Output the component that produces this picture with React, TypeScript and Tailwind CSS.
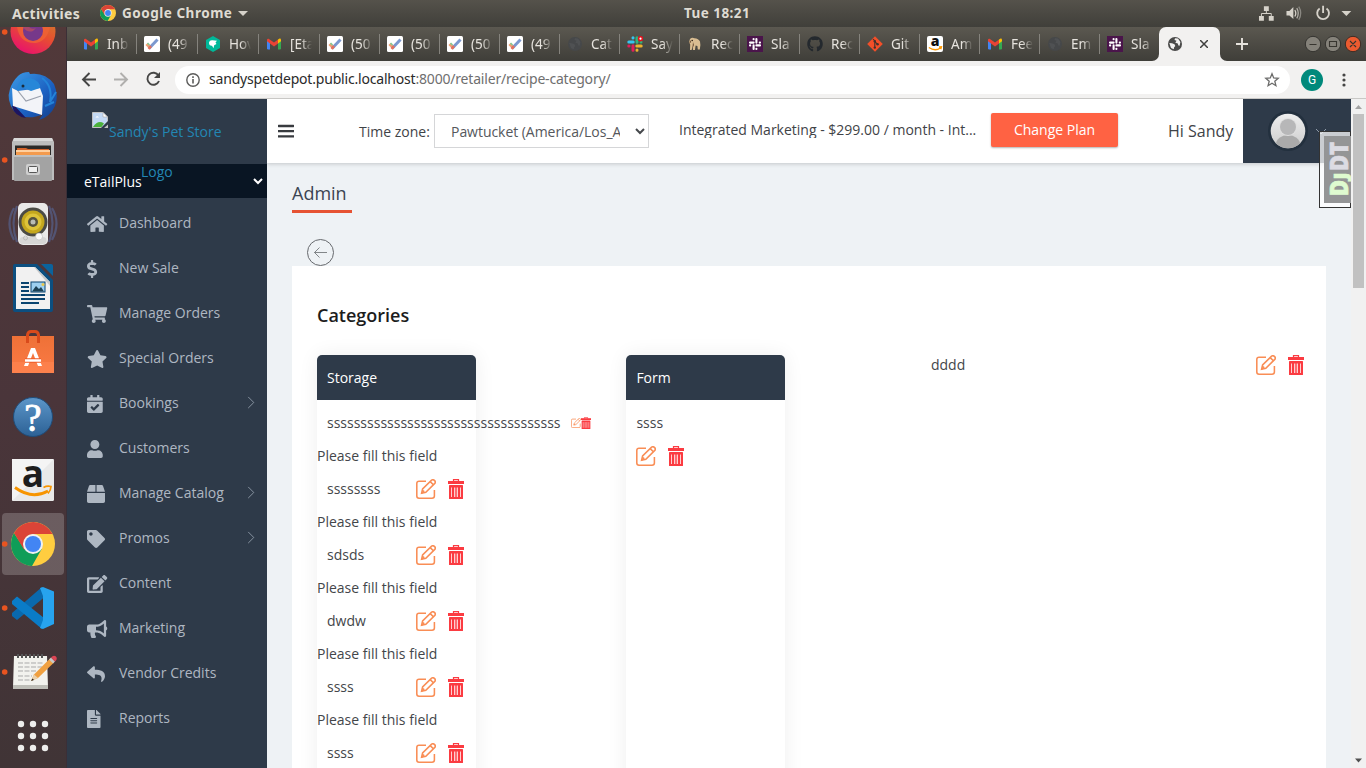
import React from "react";
import {
  FaHome, FaDollarSign, FaShoppingCart, FaStar, FaCalendarCheck, FaUser, FaBox, FaTag,
  FaEdit, FaBullhorn, FaReply, FaFileAlt, FaGithub,
} from "react-icons/fa";

/* ---------- shared drawings ---------- */

function ChromeLogo({ className }: { className: string }) {
  return (
    <svg viewBox="0 0 44 44" className={className}>
      <circle cx="22" cy="22" r="22" fill="#ffcd40" />
      <path d="M3 11 A22 22 0 0 0 21 44 L30.7 27 L22 22 L13.3 27 Z" fill="#0f9d58" />
      <path d="M3 11 L13.3 28 L16 14 L22 12 L41.600 12 A22 22 0 0 0 3 11Z" fill="#db4437" />
      <circle cx="22" cy="22" r="10" fill="#f1f1f1" />
      <circle cx="22" cy="22" r="8" fill="#4285f4" />
    </svg>
  );
}

function Gmail() {
  return (
    <svg viewBox="0 0 16 16" className="size-4">
      <path d="M1 13V4.5L4 6.8V13.5H2Z" fill="#4285f4" />
      <path d="M15 13V4.5L12 6.8V13.5H14Z" fill="#34a853" />
      <path d="M12 3.6 13.6 2.6Q15 2.4 15 4V5.2L12 7.4Z" fill="#fbbc04" />
      <path d="M1 5.2V4Q1 2.4 2.6 2.7L8 6.6 12 3.6V7.4L8 10.4 4 7.4Z" fill="#ea4335" />
    </svg>
  );
}

function Check() {
  return (
    <svg viewBox="0 0 16 16" className="size-4">
      <rect width="16" height="16" rx="1.5" fill="#fff" />
      <path d="M2.5 8 6 11.5" stroke="#f2a071" strokeWidth="3" />
      <path d="M5 12.5 13.5 3.5" stroke="#7b98cf" strokeWidth="3" />
      <path d="M4.5 12.8 7 10.2" stroke="#e8705a" strokeWidth="2.6" />
      <path d="M3.5 7 5.5 9" stroke="#82c894" strokeWidth="1.6" />
    </svg>
  );
}

function Hex() {
  return (
    <svg viewBox="0 0 16 16" className="size-4">
      <path d="M8 0 15 4V12L8 16 1 12V4Z" fill="#00b899" />
      <path d="M4 6.500Q4.500 4 7.500 4.300L12 4.700 10.500 6.500 11.500 8 9.200 9.200 8.500 12.200 7 9.800Q4 10 4 6.500Z" fill="#fff" />
    </svg>
  );
}

function GlobeIcon({ color }: { color: string }) {
  const opacity = color === "#4a4a49" ? 1 : 0.06;
  return (
    <svg viewBox="0 0 16 16" className="size-4 shrink-0">
      <circle cx="8" cy="8" r="7" fill={color} />
      <path d="M2.300 7 5 7.300 7.500 8.200 8.300 10 7 11.500 6.800 13.300 4 12Z" fill="#f2f1f0" fillOpacity={opacity} />
      <path d="M8 2.200 11 2.500 13.400 6 12.600 9.800 11.400 9.400 10.800 7.500 8.300 6.800 9.500 4.800 7.500 4Z" fill="#f2f1f0" fillOpacity={opacity} />
    </svg>
  );
}

function SlackColor() {
  return (
    <svg viewBox="0 0 16 16" className="size-4">
      <g strokeWidth="3" strokeLinecap="round">
        <path d="M1.8 6H6.2M6 1.8V2" stroke="#36c5f0" />
        <path d="M10 1.8V6.2M14 6V6" stroke="#2eb67d" />
        <path d="M9.8 10H14.2M10 14V14.2" stroke="#ecb22e" />
        <path d="M6 9.8V14.2M1.8 10H2" stroke="#e01e5a" />
      </g>
      <circle cx="13.5" cy="2.7" r="2.7" fill="#e8101c" />
      <circle cx="13.5" cy="2.7" r="1.1" fill="#fff" />
    </svg>
  );
}

function SlackPurple() {
  return (
    <svg viewBox="0 0 16 16" className="size-4">
      <rect width="16" height="16" fill="#4a154b" />
      <g stroke="#fff" strokeWidth="2.100" strokeLinecap="round">
        <path d="M3 6.600H6.600M6.600 3V3.200M9.400 3V6.600M12.800 6.600H13M9.400 9.400H13M9.400 12.800V13M6.600 9.400V13M3 9.400H3.200" />
      </g>
    </svg>
  );
}

function Dog() {
  return (
    <svg viewBox="0 0 16 16" className="size-4">
      <path d="M3 3Q5 .8 7.500 2.200 11.500 2.600 13 5.500L13.400 9 12.800 13.500H10.800L10.400 10 8.600 9.600 8 14H6L5.600 10 4.600 14H3L3.200 8.500 2 6Z" fill="#d9bd92" />
      <path d="M3 4 2.400 7.500 4.300 6ZM6 6 5.400 12.500 7 9Z" fill="#6d5138" />
      <circle cx="5.200" cy="4.500" r=".8" fill="#2f241a" />
    </svg>
  );
}

function GitIcon() {
  return (
    <svg viewBox="0 0 16 16" className="size-4">
      <path d="M8 .2 15.800 8 8 15.800.2 8Z" fill="#f34f29" />
      <path d="M6 3 7.800 5V12M7.800 5.500 10.500 8.300" stroke="#44312c" strokeWidth="1.100" fill="none" />
      <circle cx="7.800" cy="5.200" r="1.200" fill="#44312c" />
      <circle cx="10.600" cy="8.200" r="1.200" fill="#44312c" />
      <circle cx="7.800" cy="11.600" r="1.200" fill="#44312c" />
    </svg>
  );
}

function AmazonTab() {
  return (
    <svg viewBox="0 0 16 16" className="size-4">
      <rect width="16" height="16" rx="2" fill="#fff" />
      <text x="8" y="10" textAnchor="middle" fontSize="14" fontWeight="800" fontFamily="Open Sans, sans-serif" fill="#111">a</text>
      <path d="M1.800 11.500Q8 15.800 13.500 12M12 11 14.500 10.800 13.800 13.200" stroke="#f90" strokeWidth="1.300" fill="none" />
    </svg>
  );
}

function EditIcon({ className }: { className: string }) {
  return (
    <svg viewBox="0 0 20 20" className={className} fill="none" stroke="#f98d55" strokeWidth="1.550">
      <path d="M10 2.200H3Q.8 2.200.8 4.400V17Q.8 19.200 3 19.200H16Q18.400 19.200 18.400 17V11" />
      <path d="M5.600 14.200 6.600 10 15.600 1.200Q17 .1 18.600 1.600 20 3 18.800 4.400L9.800 13.200Z" />
      <path d="M14.200 2.600 17.400 5.800M5.600 14.200 8.200 11.600" />
    </svg>
  );
}

function TrashIcon({ className }: { className: string }) {
  return (
    <svg viewBox="0 0 16 20" className={className} preserveAspectRatio="none">
      <path d="M5.500 2.600V.6H10.500V2.600" stroke="#fb3b41" strokeWidth="1.200" fill="none" />
      <rect x="0" y="2" width="16" height="3" fill="#fb3b41" />
      <rect x="1" y="6" width="14" height="14" rx=".6" fill="#fb3b41" />
      <path d="M3.500 8.500V18M6.500 8.500V18M9.500 8.500V18M12.500 8.500V18" stroke="#ffcfd0" strokeWidth="1" />
      <path d="M7.500 8.500V18M8.500 8.500V18" stroke="#fd8f92" strokeWidth=".6" />
    </svg>
  );
}

/* ---------- dock ---------- */

const dockIcons: { name: string; running?: boolean; active?: boolean; art: React.ReactNode }[] = [
  {
    name: "firefox", running: true, art: (
      <>
        <defs>
          <linearGradient id="ff" x1=".8" y1="0" x2=".3" y2="1">
            <stop offset="0" stopColor="#c98a2c" /><stop offset=".5" stopColor="#e8502f" /><stop offset="1" stopColor="#e8106e" />
          </linearGradient>
        </defs>
        <circle cx="33" cy="31.500" r="22.500" fill="url(#ff)" />
        <path d="M17 27Q20 44 36 43 47 41 50 27Z" fill="#ef6335" opacity=".8" />
        <circle cx="33" cy="31" r="10" fill="#76388a" />
        <path d="M23 27H29Q32 30 36 28L33 31Q27 33 23 27Z" fill="#a8486a" />
      </>
    ),
  },
  {
    name: "thunderbird", art: (
      <>
        <defs>
          <linearGradient id="tb" x1="0" y1="0" x2="1" y2="1">
            <stop offset="0" stopColor="#3d9de8" /><stop offset=".6" stopColor="#1b5fc0" /><stop offset="1" stopColor="#123c86" />
          </linearGradient>
        </defs>
        <path d="M18 12Q22 8 29 8L30 10Q45 8 54 20 59 32 55 42 50 53 39 56L43 50Q26 58 14 47 6 36 10 25 12 18 18 12Z" fill="url(#tb)" />
        <path d="M12 42Q14 52 26 54L14 41Z" fill="#1d1560" />
        <path d="M12 24 18 27 40 24 43 32 42 51 13 42Z" fill="#f3f4f8" />
        <path d="M18 27 26 37 41 32" stroke="#9aa0ad" strokeWidth="1.200" fill="none" />
        <path d="M17 26Q18 14 30 14 41 17 40 24L31 27 21 23 18 27Z" fill="#2787d8" />
        <path d="M42 14Q53 22 50 38L56 28M45 42 54 38" stroke="#2383d8" strokeWidth="2" fill="none" />
        <circle cx="23" cy="22" r="1.500" fill="#1b2c3c" />
      </>
    ),
  },
  {
    name: "files", running: true, art: (
      <>
        <path d="M14 10H52L54 14V52H12V14Z" fill="#bdbdbd" />
        <path d="M14 10H52L53 13H13Z" fill="#d9d9d9" />
        <rect x="15" y="17.500" width="36" height="10" fill="#2c2a28" />
        <path d="M17 20H26L28 21H49V28H17Z" fill="#d3642c" />
        <rect x="16" y="22" width="34" height="2" fill="#ffcf9e" />
        <rect x="16" y="24" width="34" height="3.500" fill="#f39a4d" />
        <rect x="14" y="27" width="38" height="26" rx="1" fill="#a3a3a3" />
        <path d="M14 28H52" stroke="#dadada" strokeWidth="1" />
        <rect x="26" y="36" width="14" height="11" rx="2" fill="#cfcfcf" />
        <rect x="28.500" y="38.500" width="9" height="6" rx="1" fill="#efefef" stroke="#565656" strokeWidth="1" />
      </>
    ),
  },
  {
    name: "rhythmbox", art: (
      <>
        <path d="M14 16Q5 31 14 48M52 16Q61 31 52 48M17 14Q10 31 17 50M49 14Q56 31 49 50" stroke="#535473" strokeWidth="2.200" fill="none" />
        <rect x="18" y="11" width="30" height="42" rx="5" fill="#e9e9e8" />
        <rect x="19.500" y="45" width="27" height="7" rx="3.500" fill="#d6d6d5" />
        <circle cx="33" cy="30" r="14.500" fill="#4b4b45" />
        <circle cx="33" cy="30" r="11.500" fill="#c4a71e" />
        <circle cx="33" cy="30" r="8.500" fill="#ddc33a" />
        <circle cx="33" cy="30" r="5" fill="#55523f" />
        <circle cx="33" cy="30" r="2.500" fill="#b9bcb5" />
        <circle cx="39" cy="44.500" r="3.500" fill="#fafafa" stroke="#bbb" strokeWidth=".6" />
        <circle cx="25.500" cy="46" r="2" fill="none" stroke="#aaa" strokeWidth=".6" />
      </>
    ),
  },
  {
    name: "writer", art: (
      <>
        <path d="M15 8H37L53 24V54Q53 56 51 56H15Q13 56 13 54V10Q13 8 15 8Z" fill="#0c4f80" />
        <path d="M41 8H51Q53 8 53 10V20Z" fill="#0b639c" />
        <path d="M16 11H35L50 26V53H16Z" fill="#f1f1f1" />
        <path d="M35 11 50 26V30L34 11Z" fill="#c9c9c9" />
        <path d="M21 27H29M21 31H29M21 35H29M21 39H45M21 43H45M21 47H39" stroke="#0b4570" strokeWidth="2" />
        <rect x="31" y="26" width="14" height="10" fill="#9dd0f0" stroke="#0b4570" strokeWidth="1" />
        <path d="M32 35.500 36 30 39 33 41 31 44 35.500Z" fill="#1c4154" />
        <circle cx="43" cy="28.500" r="1.500" fill="#eac84a" />
      </>
    ),
  },
  {
    name: "software", art: (
      <>
        <defs>
          <linearGradient id="sw" x1="0" y1="0" x2="0" y2="1">
            <stop offset="0" stopColor="#ee7137" /><stop offset="1" stopColor="#fb7a45" />
          </linearGradient>
        </defs>
        <path d="M12 16H54V53H12Z" fill="url(#sw)" />
        <path d="M12 42H54V53H12Z" fill="#ff8652" opacity=".6" />
        <path d="M27.500 23V15Q28 11.500 31 11.500H35Q38 11.500 38.500 15V23" stroke="#d94a1b" strokeWidth="3" fill="none" />
        <path d="M31 28H35L42 46H38L33 33 28 46H24Z" fill="#fff" />
        <path d="M25 40.500H41" stroke="#ee5a24" strokeWidth="4.500" />
        <path d="M25 40.500H41" stroke="#fff" strokeWidth="2.500" />
      </>
    ),
  },
  {
    name: "help", art: (
      <>
        <defs>
          <linearGradient id="hp" x1="0" y1="0" x2="0" y2="1">
            <stop offset="0" stopColor="#5c96c9" /><stop offset="1" stopColor="#2c6195" />
          </linearGradient>
        </defs>
        <circle cx="33" cy="33" r="19.500" fill="url(#hp)" stroke="#1f4c79" strokeWidth="1" />
        <text x="33" y="46.500" textAnchor="middle" fontSize="39" fontWeight="400" fontFamily="Liberation Serif, serif" fill="#fff" stroke="#fff" strokeWidth=".8">?</text>
      </>
    ),
  },
  {
    name: "amazon", art: (
      <>
        <rect x="12" y="11" width="42" height="42" rx="1.500" fill="#e9e9e9" />
        <path d="M12 11H54L12 53Z" fill="#f4f4f4" />
        <text x="33" y="38.500" textAnchor="middle" fontSize="37" fontWeight="700" fontFamily="Open Sans, sans-serif" fill="#1d1d1d">a</text>
        <path d="M15 39.500Q32 52 48 43" stroke="#f79400" strokeWidth="2.800" fill="none" />
        <path d="M43.500 39.500Q47 37.500 51 38.500 51 42 48 45.500" stroke="#f79400" strokeWidth="1.700" fill="none" />
      </>
    ),
  },
  { name: "chrome", running: true, active: true, art: null },
  {
    name: "vscode", running: true, art: (
      <>
        <path d="M42 11 44 21.500 17 44 12 40V37Z" fill="#0a69ad" />
        <path d="M12 25 17 20.500 44 42 42 53 12 28Z" fill="#0a7cc7" />
        <path d="M40 52 43 44V20L40 12 43 11 54 15.500V48L43 53Z" fill="#27a3ee" />
      </>
    ),
  },
  {
    name: "gedit", running: true, art: (
      <>
        <path d="M14 16H47L48 47H13Z" fill="#f2f2ee" />
        <path d="M13 45H48V49H13Z" fill="#bebeb8" />
        <path d="M18 14V18M22 14V18M26 14V18M30 14V18M34 14V18M38 14V18M42 14V18" stroke="#555" strokeWidth="2" />
        <path d="M18 23H44M18 27H42M18 31H36M18 36H32M18 40H30" stroke="#a9a9a9" strokeWidth="1" strokeDasharray="5 1.500" />
        <path d="M31 41 34 34.500 50 18.500 54 22.500 38 38Z" fill="#f0a040" />
        <path d="M31 41 34 34.500 38 38Z" fill="#ead2ae" />
        <path d="M31 41 32.500 38.500 34 40Z" fill="#222" />
        <path d="M49 19.500 53 23.500 55 21.500 51 17.500Z" fill="#c8c8c8" />
        <path d="M51 17.500 55 21.500Q58 19 56 16.500 53.500 14.500 51 17.500Z" fill="#dc4554" />
      </>
    ),
  },
  {
    name: "apps", art: (
      <g fill="#ededec">
        {[20, 32, 44].map((y) => [21, 33, 45].map((x) => <circle key={x + "-" + y} cx={x} cy={y} r="3.200" />))}
      </g>
    ),
  },
];

function Dock() {
  return (
    <nav className="w-[67px] shrink-0 overflow-hidden border-r border-[#3b2f37] bg-gradient-to-b from-[#51393a] via-[#4a353a] to-[#403436]">
      <div className="-mt-[27px] flex flex-col">
        {dockIcons.map((d) => (
          <div key={d.name} className="relative h-16 w-[67px] shrink-0">
            {d.active && <div className="absolute top-px left-[2px] h-[62px] w-[62px] rounded bg-white/20" />}
            <svg viewBox="0 0 67 64" className="relative block h-16 w-[67px]">
              {d.running && <circle cx="4.700" cy="32" r="2.800" fill="#e95420" />}
              {d.art}
            </svg>
            {d.active && <ChromeLogo className="absolute top-[10px] left-[11px] size-[44px]" />}
          </div>
        ))}
      </div>
    </nav>
  );
}

/* ---------- desktop bar ---------- */

function TopBar() {
  return (
    <div className="flex h-[27px] shrink-0 items-center bg-gradient-to-b from-[#55524b] to-[#403f3a] font-['Noto_Sans',sans-serif] text-[14px] font-bold text-[#dfdbd2]">
      <span className="ml-3 w-[88px] tracking-[0.3px] whitespace-nowrap">Activities</span>
      <ChromeLogo className="mt-[-1px] size-4" />
      <span className="ml-[6px] w-[112px] text-[13.500px] tracking-[0.520px] whitespace-nowrap">Google Chrome</span>
      <svg viewBox="0 0 10 5" className="ml-[4px] h-[5px] w-[10px]"><path d="M0 0H10L5 5Z" fill="#d6d2ca" /></svg>
      <span className="ml-[436px] w-[80px] text-[13.500px] tracking-[0.450px] whitespace-nowrap">Tue 18:21</span>
      <svg viewBox="0 0 110 27" className="ml-[494px] h-[27px] w-[108px]" preserveAspectRatio="xMinYMid">
        <g transform="translate(1 0)" fill="#d6d2ca">
          <path d="M5 6H10V11H5ZM0 16H5V21H0ZM10 16H15V21H10Z" />
          <path d="M7.500 11V13.500M2.500 16V13.500H12.500V16" stroke="#d6d2ca" strokeWidth="1" fill="none" />
          <path d="M28 11H31L35 7V19L31 15.500H28Z" />
          <path d="M36.500 10Q38.500 13 36.500 16.500" stroke="#d6d2ca" strokeWidth="1.300" fill="none" />
          <path d="M38.500 8Q41.500 13 38.500 18.500" stroke="#b5b2ab" strokeWidth="1.300" fill="none" />
          <path d="M40.500 6.500Q44.500 13 40.500 20" stroke="#8a8882" strokeWidth="1.300" fill="none" />
          <path d="M61.800 8.300A6 6 0 1 0 68.800 8.300M65.300 5.500V13" stroke="#d6d2ca" strokeWidth="1.900" fill="none" />
          <path d="M84 11H94L89 16Z" />
        </g>
      </svg>
    </div>
  );
}

/* ---------- browser ---------- */

const tabs: { label: string; icon: React.ReactNode; wide?: boolean }[] = [
  { label: "Inb", icon: <Gmail />, wide: true },
  { label: "(49", icon: <Check />, wide: true },
  { label: "Hov", icon: <Hex />, wide: true },
  { label: "[Eta", icon: <Gmail />, wide: true },
  { label: "(50", icon: <Check /> },
  { label: "(50", icon: <Check /> },
  { label: "(50", icon: <Check /> },
  { label: "(49", icon: <Check /> },
  { label: "Cat", icon: <GlobeIcon color="#46484a" /> },
  { label: "Say", icon: <SlackColor /> },
  { label: "Rec", icon: <Dog /> },
  { label: "Sla", icon: <SlackPurple /> },
  { label: "Rec", icon: <FaGithub className="size-4 text-[#24292e]" /> },
  { label: "Git", icon: <GitIcon /> },
  { label: "Am", icon: <AmazonTab /> },
  { label: "Fee", icon: <Gmail /> },
  { label: "Em", icon: <GlobeIcon color="#46484a" /> },
  { label: "Sla", icon: <SlackPurple /> },
];

function TabStrip() {
  return (
    <div className="flex h-[34px] shrink-0 bg-gradient-to-b from-[#5b5850] to-[#3f3e39] pl-[9px]">
      {tabs.map((t, i) => (
        <div key={i} className={`flex shrink-0 items-center pl-[7px] ${t.wide ? "w-[61px]" : "w-[60px]"}`}>
          <span className="size-4 shrink-0">{t.icon}</span>
          <span className="ml-2 w-[22px] shrink-0 overflow-hidden [mask-image:linear-gradient(to_right,black_50%,transparent)] font-['Noto_Sans',sans-serif] text-[13.500px] whitespace-nowrap text-[#e6e3dd]">
            {t.label}
          </span>
          {i < tabs.length - 1 && <span className="ml-auto h-5 w-px bg-[#85837d]" />}
        </div>
      ))}
      <div className="-ml-2 flex h-[34px] w-[76px] shrink-0">
        <div className="w-[7px] bg-[#f2f1f0]"><div className="h-full rounded-br-[7px] bg-gradient-to-b from-[#5b5850] to-[#3f3e39]" /></div>
        <div className="flex w-[61px] items-center rounded-t-[7px] bg-[#f2f1f0] pl-[8px]">
          <GlobeIcon color="#4a4a49" />
          <svg viewBox="0 0 8 8" className="ml-[17px] size-2"><path d="M0 0 8 8M8 0 0 8" stroke="#3f3f3e" strokeWidth="1.500" /></svg>
        </div>
        <div className="w-[8px] bg-[#f2f1f0]"><div className="h-full rounded-bl-[7px] bg-gradient-to-b from-[#5b5850] to-[#3f3e39]" /></div>
      </div>
      <div className="flex flex-1 items-center pl-[8px]">
        <svg viewBox="0 0 12 12" className="size-3"><path d="M6 0V12M0 6H12" stroke="#e6e3dd" strokeWidth="1.900" /></svg>
        <svg viewBox="0 0 58 18" className="mr-[4px] ml-auto h-[18px] w-[58px]">
          <circle cx="9" cy="9" r="7.700" fill="#85827a" stroke="#34332f" />
          <circle cx="29" cy="9" r="7.700" fill="#85827a" stroke="#34332f" />
          <circle cx="49" cy="9" r="7.700" fill="#ec5b30" stroke="#3a2c26" />
          <path d="M5.500 9.500H12.500M25.500 6.500H32.500V11.500H25.500ZM46 6 52 12M52 6 46 12" stroke="#37352f" strokeWidth="1.100" fill="none" />
        </svg>
      </div>
    </div>
  );
}

function Toolbar() {
  return (
    <div className="flex h-[38px] shrink-0 items-center border-b border-[#c9c8c6] bg-[#f2f1f0]">
      <svg viewBox="0 0 108 38" className="h-[38px] w-[108px] shrink-0" fill="none">
        <path d="M29 18.500H16M22.500 12 16 18.500 22.500 25" stroke="#464645" strokeWidth="1.900" />
        <path d="M47 18.500H60M53.500 12 60 18.500 53.500 25" stroke="#b0afad" strokeWidth="1.900" />
        <path d="M91.500 14.500A6 6 0 1 0 92 20" stroke="#464645" strokeWidth="1.900" />
        <path d="M93 11V17H87Z" fill="#464645" />
      </svg>
      <div className="flex h-7 w-[1115px] items-center rounded-full bg-white pl-[11px]">
        <svg viewBox="0 0 14 14" className="size-[14px]"><circle cx="7" cy="7" r="6.200" fill="none" stroke="#5c5c5b" strokeWidth="1.400" /><path d="M7 6V10.500M7 3.300V4.900" stroke="#5c5c5b" strokeWidth="1.600" /></svg>
        <span className="-mt-[2px] ml-[9px] font-['Noto_Sans',sans-serif] text-[14px] tracking-[-0.190px] whitespace-nowrap text-[#2a2a2a]">
          sandyspetdepot.public.localhost<span className="text-[#6f6f6f]">:8000/retailer/recipe-category/</span>
        </span>
        <svg viewBox="0 0 16 16" className="mr-[10px] ml-auto size-4"><path d="M8 1.800 9.700 6 14.200 6.300 10.800 9.200 11.900 13.700 8 11.300 4.100 13.700 5.200 9.200 1.800 6.300 6.300 6Z" fill="none" stroke="#6b6b6a" strokeWidth="1.300" /></svg>
      </div>
      <div className="ml-[11px] flex size-[22px] items-center justify-center rounded-full bg-[#00897b] font-['Roboto',sans-serif] text-[12px] text-white">G</div>
      <svg viewBox="0 0 4 14" className="ml-[19px] h-[14px] w-1 fill-[#464645]"><circle cx="2" cy="2" r="1.600" /><circle cx="2" cy="7" r="1.600" /><circle cx="2" cy="12" r="1.600" /></svg>
    </div>
  );
}

/* ---------- page ---------- */

const menu = [
  { label: "Dashboard", Icon: FaHome },
  { label: "New Sale", Icon: FaDollarSign },
  { label: "Manage Orders", Icon: FaShoppingCart },
  { label: "Special Orders", Icon: FaStar },
  { label: "Bookings", Icon: FaCalendarCheck, sub: true },
  { label: "Customers", Icon: FaUser },
  { label: "Manage Catalog", Icon: FaBox, sub: true },
  { label: "Promos", Icon: FaTag, sub: true },
  { label: "Content", Icon: FaEdit },
  { label: "Marketing", Icon: FaBullhorn },
  { label: "Vendor Credits", Icon: FaReply },
  { label: "Reports", Icon: FaFileAlt },
];

function Sidebar() {
  return (
    <aside className="flex w-[200px] shrink-0 flex-col bg-[#2e3a49] text-sm">
      <div className="relative flex h-[65px] shrink-0 items-start pt-[13px] pl-[25px] text-[#2387b4]">
        <svg viewBox="0 0 16 16" className="size-4 shrink-0">
          <path d="M.5.500H11L15.500 5V10L10 15.500H.500Z" fill="#c3d9f5" stroke="#c2c2c2" />
          <path d="M11 .5V5H15.500Z" fill="#fff" stroke="#aaa" strokeWidth=".6" />
          <path d="M3.500 5.500Q5 3 7 5.500Z" fill="#fff" />
          <path d="M1 15Q6 7.500 12 11.500L9.500 15Z" fill="#4bb13b" />
          <path d="M9 16 16 9V11L11 16Z" fill="#2e3a49" />
          <path d="M12 16 16 12.500V16Z" fill="#c2c2c2" />
        </svg>
        <span className="ml-[1px] leading-[40px] whitespace-nowrap">Sandy's Pet Store</span>
        <span className="absolute top-[53px] left-[74px] z-10 leading-[40px]">Logo</span>
      </div>
      <div className="flex h-[34px] shrink-0 items-center bg-[#091523] pr-[4px] pl-[17px] text-white">
        <span className="mt-[2px]">eTailPlus</span>
        <svg viewBox="0 0 10 7" className="ml-auto h-[7px] w-[10px]"><path d="M1 1 5 5 9 1" stroke="#fff" strokeWidth="2" fill="none" /></svg>
      </div>
      <ul className="mt-[2px]">
        {menu.map(({ label, Icon, sub }) => (
          <li key={label} className="flex h-[45px] shrink-0 items-center pr-[12px] pl-5 text-[#aeb7c2]">
            <span className="mt-[3px] w-8"><Icon preserveAspectRatio="xMinYMid meet" className="h-[18px] w-[21px]" /></span>
            <span>{label}</span>
            {sub && <svg viewBox="0 0 8 14" className="ml-auto h-[13px] w-2"><path d="M1 1 7 7 1 13" stroke="#8f9aa7" strokeWidth="1" fill="none" /></svg>}
          </li>
        ))}
      </ul>
    </aside>
  );
}

function Header() {
  return (
    <header className="relative z-10 flex h-16 shrink-0 items-center bg-white text-sm text-[#3f4347] shadow-[0_1px_4px_rgba(0,0,0,0.18)]">
      <svg viewBox="0 0 16 14" className="-mt-px ml-[11px] h-[14px] w-4"><path d="M.5 2H15.500M.5 7.200H15.500M.5 12.400H15.500" stroke="#383b3f" strokeWidth="2.300" strokeLinecap="round" /></svg>
      <span className="mt-[2px] ml-[65px] w-[75px] whitespace-nowrap">Time zone:</span>
      <div className="flex h-[34px] w-[215px] items-center border border-[#d5d6d8] pr-[3px] pl-4 text-[#55585c]">
        <span className="mt-[2px] w-[169px] overflow-hidden tracking-[-0.04px] whitespace-nowrap">Pawtucket (America/Los_Angeles)</span>
        <svg viewBox="0 0 10 7" className="ml-auto h-[7px] w-[10px]"><path d="M1 1 5 5 9 1" stroke="#45484c" strokeWidth="2" fill="none" /></svg>
      </div>
      <span className="-mt-[2px] ml-[30px] h-[15px] w-[298px] overflow-hidden leading-[14px] whitespace-nowrap">Integrated Marketing - $299.00 / month - Int...</span>
      <button className="-mt-[2px] ml-[14px] h-[34px] w-[127px] rounded-[2px] bg-[#ff6243] text-sm text-white shadow-[0_1px_2px_rgba(0,0,0,0.3)]">Change Plan</button>
      <span className="ml-[50px] w-[75px] text-base whitespace-nowrap">Hi Sandy</span>
      <div className="flex h-full flex-1 items-center bg-[#2e3a49] pl-[25px]">
        <svg viewBox="0 0 40 40" className="size-10">
          <defs>
            <clipPath id="avatar"><circle cx="20" cy="20" r="17.300" /></clipPath>
            <linearGradient id="face" x1="0" y1="0" x2="0" y2="1"><stop offset="0" stopColor="#eee" /><stop offset="1" stopColor="#ccc" /></linearGradient>
          </defs>
          <circle cx="20" cy="20" r="20" fill="#23303e" />
          <circle cx="20" cy="20" r="17.300" fill="url(#face)" />
          <g clipPath="url(#avatar)"><ellipse cx="20" cy="33" rx="12" ry="9" fill="#aaa" /><circle cx="20" cy="16" r="9" fill="#e0e0e0" /><circle cx="20" cy="16" r="8" fill="#b7b7b8" /></g>
        </svg>
        <svg viewBox="0 0 10 6" className="mt-[2px] ml-[8px] h-[6px] w-[10px]"><path d="M0 0 5 5 10 0" stroke="#8f9aa7" fill="none" /></svg>
      </div>
    </header>
  );
}

function Actions() {
  return (
    <span className="flex items-center gap-3">
      <EditIcon className="size-5" />
      <TrashIcon className="h-5 w-4" />
    </span>
  );
}

function CategoryCard({ title, children }: { title: string; children: React.ReactNode }) {
  return (
    <section className="w-[159px] shrink-0 rounded-[5px] shadow-[0_0_20px_rgba(0,0,0,0.07)]">
      <h3 className="flex h-[45px] items-center rounded-t-[5px] bg-[#2e3a49] px-[10px] text-white">{title}</h3>
      <div className="pt-[6px]">{children}</div>
    </section>
  );
}

const storageItems = ["ssssssss", "sdsds", "dwdw", "ssss", "ssss"];

function Categories() {
  return (
    <div className="mx-[25px] h-[800px] bg-white px-[25px] pt-[37px]">
      <h2 className="mb-[27px] text-[18px] leading-[25px] font-semibold text-[#1c1c1c]">Categories</h2>
      <div className="flex h-[700px] text-sm text-[#43464a]">
        <CategoryCard title="Storage">
          <div className="flex h-[33px] items-center pl-[10px]">
            <span className="w-[244px] shrink-0">{"s".repeat(35)}</span>
            <EditIcon className="size-[10px] shrink-0" />
            <TrashIcon className="h-3 w-[10px] shrink-0" />
          </div>
          {storageItems.map((s, i) => (
            <div key={i}>
              <p className="h-[33px] leading-[34px]">Please fill this field</p>
              <div className="flex h-[33px] items-center justify-between pr-3 pl-[10px]">
                <span className="leading-[32px]">{s}</span>
                <Actions />
              </div>
            </div>
          ))}
        </CategoryCard>
        <div className="w-[150.400px] shrink-0" />
        <CategoryCard title="Form">
          <p className="h-[33px] pl-[10px] leading-[34px]">ssss</p>
          <div className="flex h-[33px] items-center pl-[10px]"><Actions /></div>
        </CategoryCard>
        <div className="ml-[135.600px] flex h-5 w-[395px] shrink-0 items-center justify-between pr-3 pl-[10px]">
          <span>dddd</span>
          <Actions />
        </div>
      </div>
    </div>
  );
}

function Scrollbar() {
  return (
    <div className="flex w-[15px] shrink-0 flex-col items-center bg-[#f1f1f1]">
      <svg viewBox="0 0 15 15" className="size-[15px]"><path d="M4 10H11L7.500 6Z" fill="#a3a3a3" /></svg>
      <div className="h-[174px] w-[11px] bg-[#c1c1c1]" />
      <svg viewBox="0 0 15 15" className="mt-auto size-[15px]"><path d="M4 5.500H11L7.500 9.500Z" fill="#505050" /></svg>
    </div>
  );
}

function DebugHandle() {
  return (
    <div className="absolute top-[32px] right-0 z-20 h-[77px] w-8 border border-[#333] bg-white/75 pt-1 pl-1">
      <svg viewBox="0 0 27 67" className="block h-[67px] w-[27px] bg-[#949596]">
        <g transform="translate(24 60) rotate(-90)" fontFamily="Open Sans, sans-serif" fontWeight="800" strokeWidth=".7">
          <text x="0" y="0" fontSize="25" textLength="16" lengthAdjust="spacingAndGlyphs" fill="#dffbd0" stroke="#dffbd0">D</text>
          <text x="16.500" y="-1" fontSize="17" textLength="7" lengthAdjust="spacingAndGlyphs" fill="#dffbd0" stroke="#dffbd0">J</text>
          <text x="25" y="0" fontSize="25" textLength="29" lengthAdjust="spacingAndGlyphs" fill="#dcdce3" stroke="#dcdce3">DT</text>
        </g>
      </svg>
    </div>
  );
}

export default function App() {
  return (
    <div className="flex h-[768px] w-[1366px] flex-col overflow-hidden">
      <TopBar />
      <div className="flex min-h-0 flex-1">
        <Dock />
        <div className="flex min-w-0 flex-1 flex-col">
          <TabStrip />
          <Toolbar />
          <div className="flex min-h-0 flex-1 font-['Open_Sans',sans-serif]">
            <Sidebar />
            <main className="relative flex min-w-0 flex-1 flex-col overflow-hidden bg-[#eef2f5]">
              <Header />
              <div className="h-[103px] shrink-0 px-[25px] pt-[18px]">
                <h1 className="inline-block h-[32px] w-[60px] border-b-[3px] border-[#e65333] text-lg leading-[25px] text-[#3b4452]">Admin</h1>
                <div className="mt-[26px] ml-[15px] leading-none">
                  <svg viewBox="0 0 28 28" className="size-7" fill="none" stroke="#66696d"><circle cx="13.500" cy="13.500" r="13" /><path d="M7.500 13.500H20M12.500 8.500 7.500 13.500 12.500 18.500" strokeWidth=".8" /></svg>
                </div>
              </div>
              <Categories />
              <DebugHandle />
            </main>
            <Scrollbar />
          </div>
        </div>
      </div>
    </div>
  );
}
